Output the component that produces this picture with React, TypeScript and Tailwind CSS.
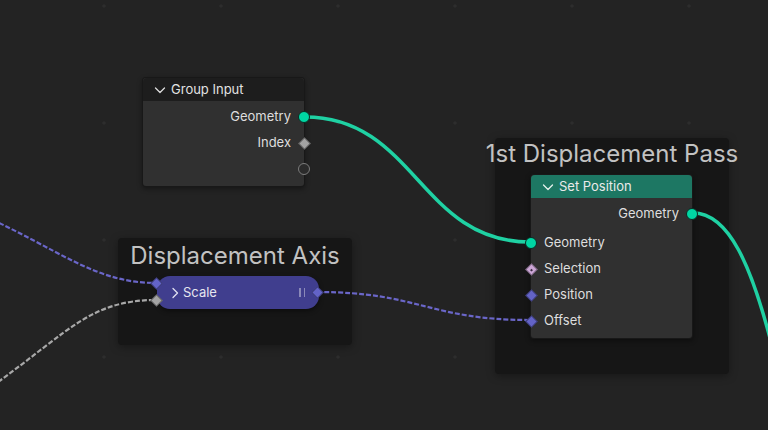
type SockKind = "geo" | "int" | "vec" | "bool" | "empty";

function Chevron({ dir, className }: { dir: "down" | "right"; className: string }) {
  return (
    <svg width="12" height="12" viewBox="0 0 12 12" fill="none" className={className}>
      {dir === "down" ? (
        <path d="M1.5 4 L6 8.5 L10.5 4" stroke="currentColor" strokeWidth="1.3" strokeLinecap="round" strokeLinejoin="round" />
      ) : (
        <path d="M4 1.5 L8.5 6 L4 10.5" stroke="currentColor" strokeWidth="1.3" strokeLinecap="round" strokeLinejoin="round" />
      )}
    </svg>
  );
}

function Glyph({ kind }: { kind: SockKind }) {
  if (kind === "geo") return <span className="w-[12px] h-[12px] rounded-full bg-[#00d6a3] border border-[#0b2a22]" />;
  if (kind === "empty") return <span className="w-[12px] h-[12px] rounded-full bg-[#2b2b2b] border border-[#7c7c7c]" />;
  const col = kind === "int" ? "bg-[#a3a3a3]" : kind === "vec" ? "bg-[#6363c7]" : "bg-[#cca6d6]";
  return (
    <span className={`w-[9px] h-[9px] rotate-45 ${col} border border-black/40 flex items-center justify-center`}>
      {kind === "bool" && <span className="w-[2px] h-[2px] bg-[#3a2a40]" />}
    </span>
  );
}

function Socket({ kind, side }: { kind: SockKind; side: "l" | "r" }) {
  const pos = side === "l" ? "left-[-7px]" : "right-[-7px]";
  return (
    <span className={`absolute ${pos} top-1/2 -translate-y-1/2 w-[14px] h-[14px] flex items-center justify-center`}>
      <Glyph kind={kind} />
    </span>
  );
}

function Row({ label, kind, side }: { label: string; kind: SockKind; side: "l" | "r" }) {
  return (
    <div className={`relative h-[26px] flex items-center px-[13px] ${side === "r" ? "justify-end" : "justify-start"}`}>
      <span className="text-[13px] text-[#dedede]">{label}</span>
      <Socket kind={kind} side={side} />
    </div>
  );
}

export default function App() {
  const dots: [number, number][] = [];
  for (let x = 104 - 117; x < 800; x += 117) for (let y = 6; y < 440; y += 117) dots.push([x, y]);

  return (
    <div className="relative w-[768px] h-[430px] overflow-hidden bg-[#232323] font-[Inter,sans-serif]">
      {/* grid */}
      <svg className="absolute inset-0" width="768" height="430">
        {dots.map(([x, y]) => (
          <circle key={`${x}-${y}`} cx={x} cy={y} r="1.8" fill="#2d2d2d" />
        ))}
      </svg>

      {/* frames */}
      <div className="absolute left-[118px] top-[238px] w-[234px] h-[107px] rounded-[4px] bg-[#161616] shadow-[0_2px_8px_rgba(0,0,0,0.35)] flex justify-center pt-[4px]">
        <span className="text-[24px] leading-[28px] text-[#c2c2c2] whitespace-nowrap">Displacement Axis</span>
      </div>
      <div className="absolute left-[495px] top-[138px] w-[234px] h-[236px] rounded-[4px] bg-[#161616] shadow-[0_2px_8px_rgba(0,0,0,0.35)] flex justify-center pt-[2px]">
        <span className="text-[24px] leading-[28px] text-[#c2c2c2] whitespace-nowrap">1st Displacement Pass</span>
      </div>

      {/* links */}
      <svg className="absolute inset-0" width="768" height="430" fill="none">
        <path d="M305,117 C415,117 420,242 530,242" stroke="#1fd1a3" strokeWidth="3.5" />
        <path d="M693,213 C728,213 752,262 776,362" stroke="#1fd1a3" strokeWidth="3.5" />
        <path d="M-20,214 C60,250 95,283 156,283" stroke="#6a66c8" strokeWidth="2.2" strokeDasharray="5 2" />
        <path d="M-2,382 C70,330 92,300 156,300" stroke="#a8a8a8" strokeWidth="2.2" strokeDasharray="5 2" />
        <path d="M317,292 C420,292 428,320 530,320" stroke="#6a66c8" strokeWidth="2.2" strokeDasharray="5 2" />
      </svg>

      {/* Group Input */}
      <div className="absolute left-[142px] top-[77px] w-[163px] rounded-[4px] bg-[#303030] border border-black/50 shadow-[0_2px_5px_rgba(0,0,0,0.4)]">
        <div className="h-[23px] rounded-t-[4px] bg-[#1d1d1d] flex items-center gap-[5px] px-[11px]">
          <Chevron dir="down" className="text-[#dcdcdc]" />
          <span className="text-[13px] text-[#e2e2e2]">Group Input</span>
        </div>
        <div className="pt-[3px] pb-[4px]">
          <Row label="Geometry" kind="geo" side="r" />
          <Row label="Index" kind="int" side="r" />
          <Row label="" kind="empty" side="r" />
        </div>
      </div>

      {/* Scale (collapsed) */}
      <div className="absolute left-[157px] top-[276px] w-[162px] h-[33px] rounded-[13px] bg-[#403e8e] shadow-[0_2px_5px_rgba(0,0,0,0.45)] flex items-center pl-[12px] pr-[14px] gap-[2px]">
        <Chevron dir="right" className="text-[#e0e0f0]" />
        <span className="text-[13px] text-[#e6e6ee] flex-1">Scale</span>
        <span className="flex gap-[3px]">
          <span className="w-[1.5px] h-[9px] bg-[#8a89b8]" />
          <span className="w-[1.5px] h-[9px] bg-[#8a89b8]" />
        </span>
        <span className="absolute left-[-8px] top-[0px] w-[14px] h-[14px] flex items-center justify-center"><Glyph kind="vec" /></span>
        <span className="absolute left-[-8px] top-[17px] w-[14px] h-[14px] flex items-center justify-center"><Glyph kind="int" /></span>
        <span className="absolute right-[-5px] top-[9px] w-[14px] h-[14px] flex items-center justify-center"><Glyph kind="vec" /></span>
      </div>

      {/* Set Position */}
      <div className="absolute left-[530px] top-[174px] w-[163px] rounded-[4px] bg-[#303030] border border-black/50 shadow-[0_2px_5px_rgba(0,0,0,0.4)]">
        <div className="h-[23px] rounded-t-[4px] bg-[#1d7763] flex items-center gap-[5px] px-[11px]">
          <Chevron dir="down" className="text-[#e6f0ec]" />
          <span className="text-[13px] text-[#eaeaea]">Set Position</span>
        </div>
        <div className="pt-[3px] pb-[4px]">
          <Row label="Geometry" kind="geo" side="r" />
          <div className="h-[3px]" />
          <Row label="Geometry" kind="geo" side="l" />
          <Row label="Selection" kind="bool" side="l" />
          <Row label="Position" kind="vec" side="l" />
          <Row label="Offset" kind="vec" side="l" />
        </div>
      </div>
    </div>
  );
}
